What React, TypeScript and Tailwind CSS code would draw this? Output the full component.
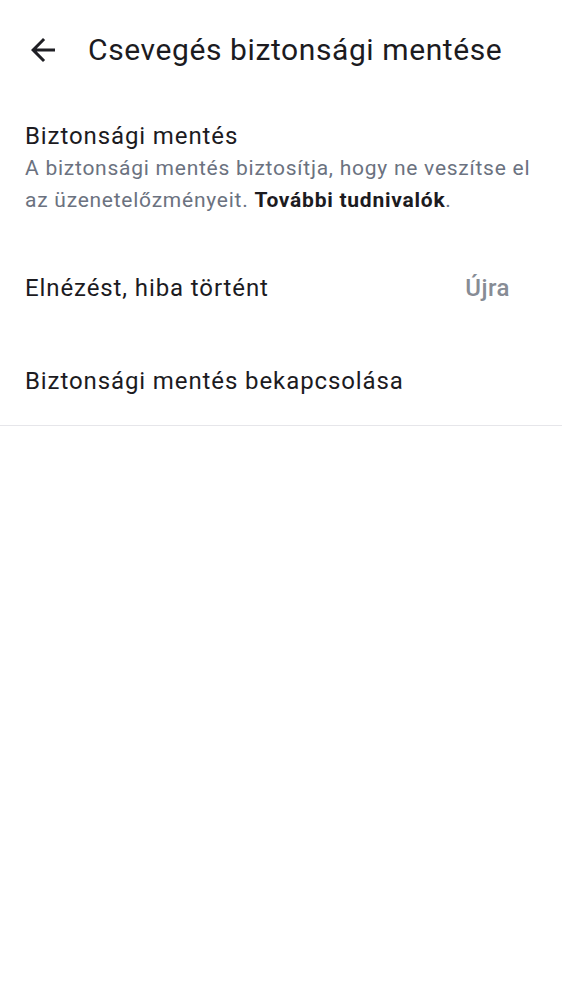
import React from "react";

export default function App() {
  return (
    <div className="min-h-screen bg-white" style={{ fontFamily: "Roboto, sans-serif" }}>
      <div className="flex items-center h-[100px] pl-[25px]">
        <svg width="36" height="36" viewBox="0 0 24 24" fill="#1f1f24">
          <path d="M20 11H7.83l5.59-5.59L12 4l-8 8 8 8 1.41-1.41L7.83 13H20v-2z" />
        </svg>
        <h1 className="ml-[27px] text-[30px] tracking-[0.6px] text-[#1c1b1f] leading-none">Csevegés biztonsági mentése</h1>
      </div>
      <div className="px-[25px] pt-[20px]">
        <div className="text-[24px] tracking-[0.9px] leading-[32px] text-[#1c1b1f]">Biztonsági mentés</div>
        <div className="text-[21px] tracking-[0.75px] leading-[32px] text-[#6b7280]">
          A biztonsági mentés biztosítja, hogy ne veszítse el az üzenetelőzményeit.{" "}
          <span className="font-bold text-[#1c1b1f]">További tudnivalók</span>.
        </div>
      </div>
      <div className="flex items-center justify-between h-[98px] pl-[25px] pr-[52px] mt-[23px]">
        <span className="text-[24px] tracking-[0.9px] text-[#1c1b1f]">Elnézést, hiba történt</span>
        <span className="text-[24px] tracking-[0.5px] font-medium text-[#878c95]">Újra</span>
      </div>
      <div className="flex items-center h-[89px] pl-[25px] border-b border-[#e6e6ea]">
        <span className="text-[24px] tracking-[0.9px] text-[#1c1b1f]">Biztonsági mentés bekapcsolása</span>
      </div>
    </div>
  );
}
